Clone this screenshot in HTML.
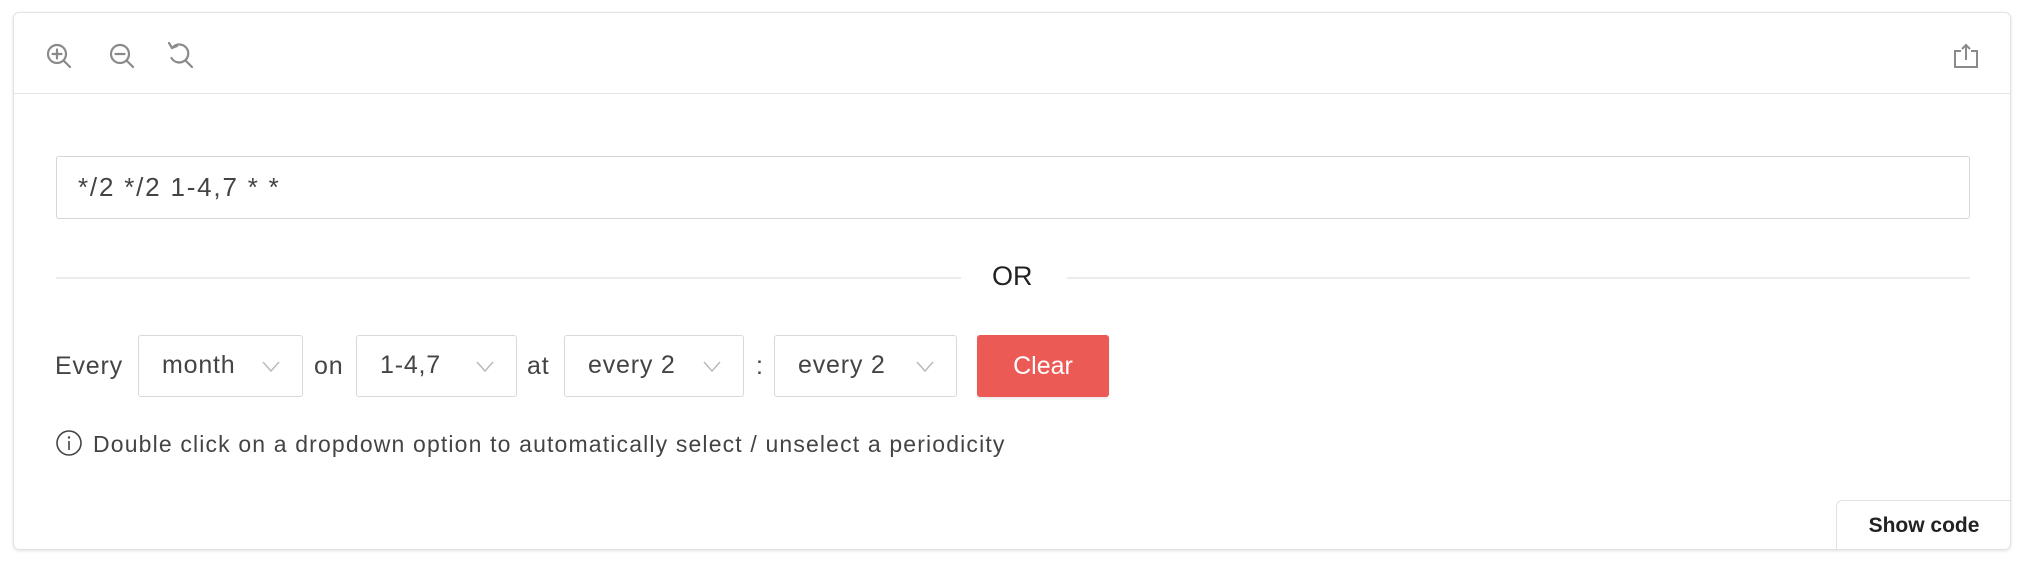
<!DOCTYPE html>
<html><head><meta charset="utf-8"><style>
*{box-sizing:border-box;margin:0;padding:0}
body{width:2028px;height:562px;background:#fff;font-family:"Liberation Sans",Arial,sans-serif;color:#444;position:relative;overflow:hidden}
.card{position:absolute;left:13px;top:12px;width:1998px;height:538px;border:1.5px solid #e2e2e2;border-radius:6px;box-shadow:0 1px 3px rgba(0,0,0,0.12);overflow:hidden}
.tb{position:absolute;left:0;top:0;right:0;height:81px;border-bottom:1.5px solid #e4e4e4}
.abs{position:absolute}
.input{position:absolute;left:42px;top:143px;width:1914px;height:63px;border:1.5px solid #d6d6d6;border-radius:3px;font-size:26px;letter-spacing:1.8px;line-height:60px;padding-left:21px;color:#444}
.line{position:absolute;height:1.5px;background:#ececec;top:264px}
.or{position:absolute;left:978px;top:248px;font-size:27px;color:#222;font-weight:500}
.lbl{position:absolute;top:322px;height:62px;line-height:62px;font-size:25px;letter-spacing:0.8px;color:#444}
.sel{position:absolute;top:322px;height:62px;border:1.5px solid #d9d9d9;border-radius:3px;font-size:25px;letter-spacing:0.8px;line-height:59px;padding-left:23px;color:#444}
.sel svg{position:absolute;right:22px;top:25px}
.clear{position:absolute;left:963px;top:322px;width:132px;height:62px;background:#ec5a56;border-radius:3px;color:#fff;font-size:25px;line-height:62px;text-align:center;box-shadow:0 2px 2px rgba(0,0,0,0.08)}
.info{position:absolute;left:79px;top:417px;font-size:23px;letter-spacing:1.15px;line-height:28px;color:#444;white-space:nowrap}
.show{position:absolute;right:-2px;bottom:-2px;width:176px;height:51px;border:1.5px solid #e2e2e2;border-radius:6px 0 0 0;font-size:21px;font-weight:bold;color:#222;line-height:50px;text-align:center}
</style></head><body>
<div class="card">
<div class="tb">
<svg class="abs" style="left:0;top:0" width="220" height="80" viewBox="13 12 220 80">
<g fill="none" stroke="#8a8a8a" stroke-width="2.2" stroke-linecap="round">
<circle cx="56" cy="53" r="9"/><line x1="62.5" y1="59.5" x2="69" y2="66"/><line x1="51.5" y1="53" x2="60.5" y2="53"/><line x1="56" y1="48.5" x2="56" y2="57.5"/>
<circle cx="119" cy="53" r="9"/><line x1="125.5" y1="59.5" x2="132" y2="66"/><line x1="114.5" y1="53" x2="123.5" y2="53"/>
<path d="M172 46 A9 9 0 1 1 170.5 57"/><line x1="184.5" y1="59.5" x2="191" y2="66"/><path d="M168 42 L171 47 L176 45"/>
</g></svg>
<svg class="abs" style="left:1928px;top:24px" width="40" height="40" viewBox="1941 36 40 40">
<g fill="none" stroke="#8a8a8a" stroke-width="2"><path d="M1960 50 H1954 V66 H1976 V50 H1970"/><line x1="1965" y1="44" x2="1965" y2="59"/><path d="M1961 48 L1965 44 L1969 48"/></g></svg>
</div>
<div class="input">*/2 */2 1-4,7 * *</div>
<div class="line" style="left:42px;width:905px"></div>
<div class="line" style="left:1053px;width:903px"></div>
<div class="or">OR</div>
<div class="lbl" style="left:41px">Every</div>
<div class="sel" style="left:124px;width:165px">month<svg width="18" height="11"><path d="M1 1 L9 10 L17 1" fill="none" stroke="#bbb" stroke-width="1.5"/></svg></div>
<div class="lbl" style="left:300px">on</div>
<div class="sel" style="left:342px;width:161px">1-4,7<svg width="18" height="11"><path d="M1 1 L9 10 L17 1" fill="none" stroke="#bbb" stroke-width="1.5"/></svg></div>
<div class="lbl" style="left:513px">at</div>
<div class="sel" style="left:550px;width:180px">every 2<svg width="18" height="11"><path d="M1 1 L9 10 L17 1" fill="none" stroke="#bbb" stroke-width="1.5"/></svg></div>
<div class="lbl" style="left:742px">:</div>
<div class="sel" style="left:760px;width:183px">every 2<svg width="18" height="11"><path d="M1 1 L9 10 L17 1" fill="none" stroke="#bbb" stroke-width="1.5"/></svg></div>
<div class="clear">Clear</div>
<svg class="abs" style="left:41px;top:416px" width="30" height="30"><circle cx="14" cy="14" r="12" fill="none" stroke="#444" stroke-width="1.6"/><line x1="14" y1="12" x2="14" y2="21" stroke="#444" stroke-width="1.6"/><circle cx="14" cy="8.5" r="1.2" fill="#444"/></svg>
<div class="info">Double click on a dropdown option to automatically select / unselect a periodicity</div>
<div class="show">Show code</div>
</div>
</body></html>
